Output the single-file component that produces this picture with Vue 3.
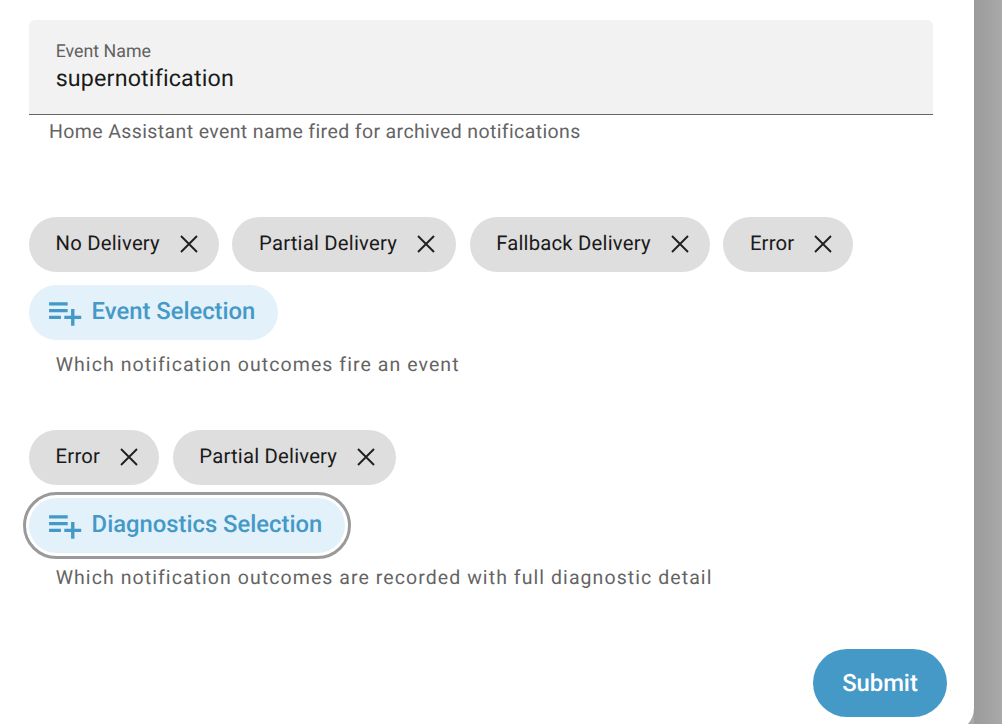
<script setup>
const groups = [
  { chips: ['No Delivery', 'Partial Delivery', 'Fallback Delivery', 'Error'], button: 'Event Selection', help: 'Which notification outcomes fire an event', focused: false },
  { chips: ['Error', 'Partial Delivery'], button: 'Diagnostics Selection', help: 'Which notification outcomes are recorded with full diagnostic detail', focused: true },
]
</script>

<template>
  <div class="page">
    <main class="panel">
      <div class="field">
        <span class="label">Event Name</span>
        <span class="value">supernotification</span>
      </div>
      <p class="field-help">Home Assistant event name fired for archived notifications</p>

      <section v-for="g in groups" :key="g.button" class="group">
        <div class="chips">
          <span v-for="c in g.chips" :key="c" class="chip">
            <span class="chip-text">{{ c }}</span>
            <svg class="x" viewBox="0 0 20 20" width="20" height="20"><path d="M2 2 18 18M18 2 2 18" fill="none" stroke="#1f1f1f" stroke-width="1.9" /></svg>
          </span>
        </div>
        <div class="btn-row">
          <button class="add" :class="{ focused: g.focused }">
            <svg class="plus" viewBox="0 0 24 24" width="40.6" height="40.6">
              <path d="M3 16H10V14H3M18 14V10H16V14H12V16H16V20H18V16H22V14M14 6H3V8H14V6M14 10H3V12H14V10Z" fill="#4499c7" />
            </svg>
            <span class="add-text">{{ g.button }}</span>
          </button>
        </div>
        <p class="group-help">{{ g.help }}</p>
      </section>

      <div class="actions">
        <button class="submit">Submit</button>
      </div>
    </main>
  </div>
</template>

<style>
html, body { margin: 0; background: #a2a2a2; }
</style>

<style scoped>
.page {
  width: 1002px;
  height: 724px;
  overflow: hidden;
  background: linear-gradient(90deg, #9b9b9b, #a9a9a9);
  background-size: 28px 100%;
  background-position: right;
  font-family: Roboto, sans-serif;
  text-rendering: geometricPrecision;
}
.panel {
  width: 974px;
  height: 732px;
  box-sizing: border-box;
  background: #fff;
  border-bottom-right-radius: 24px;
  padding: 20px 41px 0 29px;
}
.field {
  height: 95px;
  box-sizing: border-box;
  background: #f2f2f2;
  border-bottom: 1.4px solid #666;
  border-radius: 6px 6px 0 0;
  padding: 22px 26.7px 0;
  display: flex;
  flex-direction: column;
}
.label { font-size: 17.8px; line-height: 20px; color: #616161; }
.value { font-size: 23.3px; line-height: 32px; letter-spacing: .15px; color: #1a1a1a; }
.field-help {
  margin: 6px 0 0 20px;
  font-size: 19.5px;
  line-height: 21px;
  letter-spacing: .38px;
  color: #646464;
}
.field-help + .group { margin-top: 75px; }
.group + .group { margin-top: 54px; }
.chips { display: flex; gap: 13.6px; }
.chip {
  height: 54.6px;
  box-sizing: border-box;
  border-radius: 28px;
  background: #dedede;
  padding: 0 20px 0 26.6px;
  display: flex;
  align-items: center;
  gap: 19px;
  font-size: 20.3px;
  color: #1a1a1a;
  letter-spacing: .2px;
}
.chip-text { margin-top: -3px; }
.x { margin-top: -1px; }
.btn-row { margin-top: 13.4px; display: flex; }
.add {
  height: 55px;
  border: 0;
  border-radius: 28px;
  background: #e3f1fb;
  color: #4499c7;
  font: 500 23.8px Roboto, sans-serif;
  text-rendering: geometricPrecision;
  padding: 0 22.5px 0 15px;
  display: flex;
  align-items: center;
  gap: 7px;
}
.add-text { margin-top: -2px; }
.add.focused {
  outline: 3px solid #9a9a9a;
  outline-offset: 3.7px;
}
.group-help {
  margin: 14px 0 0 26.7px;
  font-size: 19.5px;
  line-height: 22px;
  letter-spacing: 1.07px;
  color: #646464;
}
.actions { display: flex; justify-content: flex-end; margin: 60px -14px 0 0; }
.submit {
  height: 68px;
  width: 134px;
  border: 0;
  border-radius: 34px;
  background: #4499c7;
  color: #fff;
  font: 500 23.8px Roboto, sans-serif;
  text-rendering: geometricPrecision;
}
</style>
